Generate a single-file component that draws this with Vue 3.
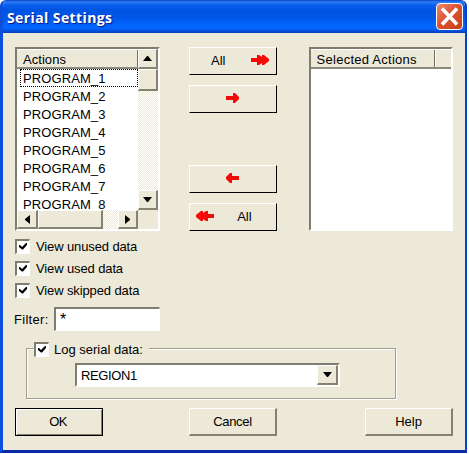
<script setup>
import { ref } from 'vue'

const programs = Array.from({ length: 8 }, (_, i) => `PROGRAM_${i + 1}`)
const options = ref([
  { label: 'View unused data', checked: true },
  { label: 'View used data', checked: true },
  { label: 'View skipped data', checked: true }
])
const logSerial = ref(true)
const filter = ref('*')
</script>

<template>
  <div class="window">
    <header class="titlebar">
      <h1>Serial Settings</h1>
      <button class="close" aria-label="Close">
        <svg width="21" height="21" viewBox="0 0 21 21"><path d="M3 2.5 18 18.5M18 2.5 3 18.5" stroke="#fff" stroke-width="3.6" /></svg>
      </button>
    </header>

    <main class="body">
      <section class="transfer">
        <div class="list source">
          <div class="view">
            <div class="head"><span>Actions</span></div>
            <ul>
              <li v-for="(p, i) in programs" :key="p" :class="{ focused: i === 0 }">{{ p }}</li>
            </ul>
          </div>
          <div class="vbar">
            <button class="raised up" aria-label="Up"><svg width="9" height="5" viewBox="0 0 9 5"><path d="M4 0h1l4 5H0z" /></svg></button>
            <i class="raised vthumb"></i>
            <button class="raised down" aria-label="Down"><svg width="9" height="5" viewBox="0 0 9 5"><path d="M0 0h9L5 5H4z" /></svg></button>
          </div>
          <div class="hbar">
            <button class="raised left" aria-label="Left"><svg width="5" height="9" viewBox="0 0 5 9"><path d="M5 0v9L0 5V4z" /></svg></button>
            <i class="raised hthumb"></i>
            <button class="raised right" aria-label="Right"><svg width="5" height="9" viewBox="0 0 5 9"><path d="M0 0v9l5-4V4z" /></svg></button>
          </div>
        </div>

        <div class="moves">
          <button class="move all-right">
            <span>All</span>
            <svg width="18" height="10" viewBox="0 0 18 10"><path d="M0 3h6V0h2l3 2V0h2l5 4v2l-5 4h-2V8l-3 2H6V7H0z" /></svg>
          </button>
          <button class="move" aria-label="Add">
            <svg width="13" height="10" viewBox="0 0 13 10"><path d="M0 3h7V0h2l4 4v2l-4 4H7V7H0z" /></svg>
          </button>
          <button class="move back" aria-label="Remove">
            <svg width="13" height="10" viewBox="0 0 13 10"><path d="M13 3H6V0H4L0 4v2l4 4h2V7h7z" /></svg>
          </button>
          <button class="move all-left">
            <svg width="18" height="10" viewBox="0 0 18 10"><path d="M18 3h-6V0h-2L7 2V0H5L0 4v2l5 4h2V8l3 2h2V7h6z" /></svg>
            <span>All</span>
          </button>
        </div>

        <div class="list target">
          <div class="head"><span>Selected Actions</span><i></i></div>
        </div>
      </section>

      <section class="options">
        <label v-for="o in options" :key="o.label">
          <span class="check"><svg v-if="o.checked" width="8" height="7" viewBox="0 0 8 7"><path d="M0 2h1l2 2 4-4h1v2L4 6.5H3L0 4z" /></svg></span>
          <span>{{ o.label }}</span>
        </label>
      </section>

      <section class="filter">
        <label for="filter">Filter:</label>
        <input id="filter" v-model="filter" type="text" />
      </section>

      <section class="group">
        <label class="legend">
          <span class="check"><svg v-if="logSerial" width="8" height="7" viewBox="0 0 8 7"><path d="M0 2h1l2 2 4-4h1v2L4 6.5H3L0 4z" /></svg></span>
          <span>Log serial data:</span>
        </label>
        <div class="select">
          <span>REGION1</span>
          <button class="raised" aria-label="Open"><svg width="9" height="5" viewBox="0 0 9 5"><path d="M0 0h9L5 5H4z" /></svg></button>
        </div>
      </section>

      <footer class="actions">
        <button class="cmd ok">OK</button>
        <button class="cmd cancel">Cancel</button>
        <button class="cmd help">Help</button>
      </footer>
    </main>
  </div>
</template>

<style>
body {
  background: #fff;
  overflow: hidden;
}
</style>

<style scoped>
* {
  box-sizing: border-box;
}
.window {
  width: 467px;
  height: 453px;
  background: #ece9d8;
  border: solid #0842cc;
  border-width: 0 2px 3px 3px;
  border-left-color: #0c4fdc;
  border-bottom-color: #0829a8;
  border-radius: 6px 6px 0 0;
  overflow: hidden;
  font: 13px/18px "Liberation Sans", Arial, sans-serif;
  color: #000;
}
button {
  font: inherit;
  color: inherit;
  padding: 0;
  border: 0;
  background: #ece9d8;
}
svg {
  display: block;
  flex: none;
}
.titlebar {
  height: 33px;
  margin: 0 -2px 0 -3px;
  padding: 3px 4px 0 7px;
  display: flex;
  justify-content: space-between;
  background: linear-gradient(#0a45c4 0, #2b7df5 2px, #0b60ea 5px, #0054e3 10px, #0055e8 17px, #0364fb 25px, #0366ff 28px, #0450d8 31px, #0340b4 33px);
}
h1 {
  margin: 4px 0 0;
  font: bold 14px/22px "Open Sans", "Noto Sans", sans-serif;
  letter-spacing: 0.4px;
  color: #fff;
  text-shadow: 1px 1px 1px #0a1883;
}
.close {
  width: 27px;
  height: 27px;
  border: 1px solid #fff;
  border-radius: 4px;
  display: grid;
  place-items: center;
  background: linear-gradient(135deg, #e9896c, #dc5334 45%, #c73f18);
}
.body {
  padding: 14px 12px 0;
}
.transfer {
  display: flex;
  height: 184px;
}
.list {
  width: 145px;
  height: 184px;
  border: 2px solid;
  border-color: #7f7d70 #fff #fff #7f7d70;
  background: #fff;
}
.source {
  display: grid;
  grid-template: 161px 19px / 121px 20px;
}
.view {
  overflow: hidden;
}
.head {
  height: 20px;
  display: flex;
  background: #ece9d8;
  border-top: 1px solid #fff;
  border-bottom: 2px solid #8b8979;
  line-height: 20px;
}
.head span {
  padding-left: 6px;
  flex: 1;
  border-right: 1px solid #716f64;
  letter-spacing: 0.25px;
  white-space: nowrap;
}
.source .head span {
  letter-spacing: 0.05px;
}
.target .head i {
  width: 16px;
  border-left: 1px solid #fff;
}
ul {
  list-style: none;
  margin: 0;
  padding: 0 0 0 3px;
}
li {
  height: 18px;
  padding-left: 3px;
  line-height: 20px;
  white-space: nowrap;
  letter-spacing: 0.1px;
}
.focused {
  outline: 1px dotted #000;
  outline-offset: -1px;
}
.raised {
  display: grid;
  place-items: center;
  border: solid;
  border-width: 1px 2px 2px 1px;
  border-color: #fff #85836f #85836f #fff;
  background: #ece9d8;
}
.vbar,
.hbar {
  display: flex;
  background: repeating-conic-gradient(#fff 0 25%, #ece9d8 0 50%) 0 0 / 2px 2px;
}
.vbar {
  flex-direction: column;
}
.up,
.down {
  height: 20px;
}
.vthumb {
  height: 22px;
}
.down {
  margin-top: auto;
}
.hbar {
  grid-column: 1 / 3;
  border-right: 20px solid #ece9d8;
}
.left {
  width: 21px;
}
.hthumb {
  width: 65px;
}
.right {
  width: 20px;
  margin-left: auto;
}
.moves {
  width: 88px;
  margin: 0 32px 0 29px;
  display: flex;
  flex-direction: column;
  gap: 10px;
}
.move {
  height: 28px;
  display: flex;
  align-items: center;
  justify-content: center;
  padding-bottom: 2px;
  border: 1px solid;
  border-color: #fff #000 #000 #fff;
}
.move svg {
  fill: #f60808;
}
.move span {
  padding-top: 2px;
}
.back {
  margin-top: 42px;
}
.all-right {
  justify-content: space-between;
  padding: 0 7px 2px 21px;
}
.all-left {
  justify-content: space-between;
  padding: 0 24px 2px 6px;
}
.options {
  margin-top: 8px;
  display: flex;
  flex-direction: column;
  gap: 7px;
}
.options label {
  display: flex;
  height: 15px;
  align-items: center;
  gap: 6px;
  letter-spacing: -0.12px;
}
.check {
  width: 15px;
  height: 15px;
  flex: none;
  padding: 2px 0 0 2px;
  border: solid;
  border-width: 2px 1px 1px 2px;
  border-color: #7f7d70 #fff #fff #7f7d70;
  background: #fff;
}
.filter {
  display: flex;
  align-items: center;
  height: 24px;
  margin-top: 9px;
}
.filter label {
  width: 40px;
  margin-left: -1px;
  padding-top: 2px;
  letter-spacing: 0.3px;
}
.filter input {
  width: 106px;
  height: 24px;
  padding: 1px 4px 0;
  border: solid;
  border-color: #7f7d70 #fff #fff #7f7d70;
  border-width: 2px 1px 1px 2px;
  font: 16px/20px "Liberation Sans", Arial, sans-serif;
  outline: 0;
}
.group {
  width: 370px;
  height: 51px;
  margin: 17px 0 0 11px;
  border: 1px solid #a09e8d;
  box-shadow: inset 1px 1px #fff, 1px 1px #fff;
}
.legend {
  width: 115px;
  height: 15px;
  margin: -7px 0 0 7px;
  display: flex;
  align-items: center;
  gap: 5px;
  background: #ece9d8;
  white-space: nowrap;
}
.select {
  width: 265px;
  height: 24px;
  margin: 6px 0 0 48px;
  display: flex;
  justify-content: space-between;
  border: 2px solid;
  border-color: #7f7d70 #fff #fff #7f7d70;
  background: #fff;
}
.select span {
  padding-left: 4px;
  line-height: 22px;
  letter-spacing: -0.4px;
}
.select button {
  width: 21px;
}
.actions {
  display: flex;
  margin-top: 9px;
}
.cmd {
  width: 88px;
  height: 28px;
  border: solid;
  border-width: 1px 2px 2px 1px;
  border-color: #fff #85836f #85836f #fff;
}
.ok {
  padding-right: 2px;
  border: 1px solid #000;
  box-shadow: inset 1px 1px #fff, inset -1px -1px #85836f;
  letter-spacing: -0.6px;
}
.cancel {
  margin: 0 88px 0 86px;
  letter-spacing: -0.3px;
}
</style>
